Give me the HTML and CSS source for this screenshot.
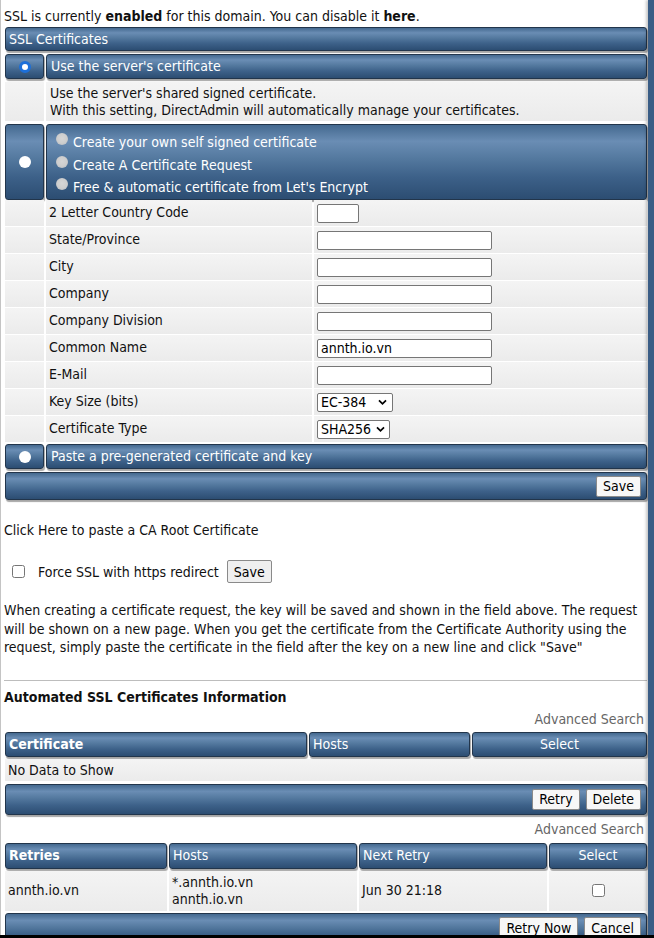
FILE: index.html
```html
<!DOCTYPE html>
<html lang="en">
<head>
<meta charset="utf-8">
<title>SSL Certificates</title>
<link rel="stylesheet" href="styles.css">
</head>
<body>
<div class="page">
  <div class="main">
    <p class="status">SSL is currently <b>enabled</b> for this domain. You can disable it <b>here</b>.</p>

    <div class="ssl">
      <div class="bar title">SSL Certificates</div>

      <div class="pair r1">
        <div class="bar rcell"><span class="radio on"></span></div>
        <div class="bar tcell">Use the server's certificate</div>
      </div>

      <div class="pair desc">
        <div class="cell"></div>
        <div class="cell dtext">Use the server's shared signed certificate.<br>With this setting, DirectAdmin will automatically manage your certificates.</div>
      </div>

      <div class="pair opts">
        <div class="bar rcell"><span class="radio"></span></div>
        <div class="bar ocell">
          <div class="opt"><span class="radio dis"></span>Create your own self signed certificate</div>
          <div class="opt"><span class="radio dis"></span>Create A Certificate Request</div>
          <div class="opt"><span class="radio dis"></span>Free &amp; automatic certificate from Let's Encrypt</div>
        </div>
      </div>

      <div class="form">
        <div class="cell"></div><div class="cell lbl">2 Letter Country Code</div><div class="cell val"><input class="txt short" type="text"></div>
        <div class="cell"></div><div class="cell lbl">State/Province</div><div class="cell val"><input class="txt" type="text"></div>
        <div class="cell"></div><div class="cell lbl">City</div><div class="cell val"><input class="txt" type="text"></div>
        <div class="cell"></div><div class="cell lbl">Company</div><div class="cell val"><input class="txt" type="text"></div>
        <div class="cell"></div><div class="cell lbl">Company Division</div><div class="cell val"><input class="txt" type="text"></div>
        <div class="cell"></div><div class="cell lbl">Common Name</div><div class="cell val"><input class="txt" type="text" value="annth.io.vn"></div>
        <div class="cell"></div><div class="cell lbl">E-Mail</div><div class="cell val"><input class="txt" type="text"></div>
        <div class="cell"></div><div class="cell lbl">Key Size (bits)</div><div class="cell val"><span class="sel w76">EC-384<svg class="chev" viewBox="0 0 10 8" width="9" height="7"><path d="M1 1.5 L5 5.5 L9 1.5" fill="none" stroke="#000" stroke-width="2"/></svg></span></div>
        <div class="cell"></div><div class="cell lbl">Certificate Type</div><div class="cell val"><span class="sel w73">SHA256<svg class="chev" viewBox="0 0 10 8" width="9" height="7"><path d="M1 1.5 L5 5.5 L9 1.5" fill="none" stroke="#000" stroke-width="2"/></svg></span></div>
      </div>

      <div class="pair paste">
        <div class="bar rcell"><span class="radio"></span></div>
        <div class="bar tcell">Paste a pre-generated certificate and key</div>
      </div>

      <div class="bar actions a1"><button class="btn">Save</button></div>
    </div>

    <p class="ca">Click Here to paste a CA Root Certificate</p>

    <div class="force">
      <input type="checkbox" class="chk">
      <span class="force-label">Force SSL with https redirect</span>
      <button class="btn plain">Save</button>
    </div>

    <p class="note">When creating a certificate request, the key will be saved and shown in the field above. The request will be shown on a new page. When you get the certificate from the Certificate Authority using the request, simply paste the certificate in the field after the key on a new line and click "Save"</p>

    <div class="rule"></div>

    <h2 class="section">Automated SSL Certificates Information</h2>

    <div class="adv">Advanced Search</div>
    <div class="list l1">
      <div class="bar hcell b">Certificate</div>
      <div class="bar hcell">Hosts</div>
      <div class="bar hcell c">Select</div>
      <div class="cell empty">No Data to Show</div>
    </div>
    <div class="bar actions a2"><button class="btn">Retry</button><button class="btn">Delete</button></div>

    <div class="adv second">Advanced Search</div>
    <div class="list l2">
      <div class="bar hcell b">Retries</div>
      <div class="bar hcell">Hosts</div>
      <div class="bar hcell">Next Retry</div>
      <div class="bar hcell c">Select</div>
      <div class="cell dcell">annth.io.vn</div>
      <div class="cell dcell">*.annth.io.vn<br>annth.io.vn</div>
      <div class="cell dcell">Jun 30 21:18</div>
      <div class="cell dcell c"><input type="checkbox" class="chk2"></div>
    </div>
    <div class="bar actions a3"><button class="btn">Retry Now</button><button class="btn">Cancel</button></div>
  </div>
  <div class="side"></div>
</div>
<div class="bottom-edge"></div>
</body>
</html>
```

FILE: styles.css
```css
html, body {
  margin: 0;
  padding: 0;
  background: #fff;
}

body {
  font-family: "DejaVu Sans Condensed", "DejaVu Sans", sans-serif;
  font-size: 14px;
  color: #111;
}

.page {
  display: flex;
  width: 654px;
  min-height: 938px;
}

.main {
  width: 644px;
  border-left: 1px solid #c4c4c4;
  padding: 0 0 40px 3px;
}

.side {
  width: 6px;
  background: #3a5d86;
  box-shadow: -2px 0 3px rgba(0, 0, 0, 0.22);
}

.bottom-edge {
  position: fixed;
  left: 0;
  right: 0;
  bottom: 0;
  height: 3px;
  background: #000;
}

.status {
  margin: 0;
  padding-top: 7px;
  line-height: 18px;
}

/* blue bars */
.bar {
  box-sizing: border-box;
  background: linear-gradient(#44698f 0%, #6a8db4 22%, #54799f 45%, #3d6189 70%, #2c4d72 100%);
  border: 1px solid #22354b;
  border-radius: 3px;
  box-shadow: 1px 2px 1px rgba(0, 0, 0, 0.35);
  color: #fff;
}

.cell {
  background: linear-gradient(#f4f4f4, #ebebeb);
}

.ssl {
  margin: 2px 1px 0 1px;
  display: flex;
  flex-direction: column;
}

.title {
  height: 24px;
  line-height: 22px;
  padding-left: 3px;
  margin-bottom: 3px;
}

.pair {
  display: grid;
  grid-template-columns: 39px 1fr;
  column-gap: 2px;
}

.r1 { height: 25px; }
.tcell {
  line-height: 23px;
  padding-left: 4px;
}

.rcell {
  display: flex;
  align-items: center;
  justify-content: center;
}

.radio {
  display: inline-block;
  box-sizing: border-box;
  width: 12px;
  height: 12px;
  border-radius: 50%;
  background: #fff;
}

.radio.on {
  border: 3px solid #1c6fd9;
}

.radio.dis {
  background: radial-gradient(circle at 50% 45%, #d6d6d6 0%, #cdcdcd 55%, #a9b2bc 100%);
  margin-right: 5px;
  position: relative;
  top: -3px;
}

.desc {
  margin-top: 3px;
  height: 39px;
}

.dtext {
  padding: 3px 0 0 4px;
  line-height: 17px;
}

.opts {
  margin-top: 3px;
  height: 75px;
}

.ocell {
  padding: 6px 0 0 9px;
}

.opt {
  height: 22.5px;
  line-height: 22px;
  display: flex;
  align-items: center;
}

.form {
  margin-top: 1px;
  display: grid;
  grid-template-columns: 39px 266px 1fr;
  grid-auto-rows: 26px;
  column-gap: 2px;
  row-gap: 1px;
}

.lbl {
  line-height: 25px;
  padding-left: 3px;
}

.val {
  display: flex;
  align-items: center;
  padding-left: 3px;
}

.txt {
  box-sizing: border-box;
  width: 175px;
  height: 19px;
  border: 1px solid #767676;
  border-radius: 2px;
  background: #fff;
  font: inherit;
  padding: 0 4px 0 3px;
  margin: 0;
  color: #000;
}

.txt.short { width: 42px; }

.sel {
  box-sizing: border-box;
  display: inline-flex;
  align-items: center;
  justify-content: space-between;
  height: 19px;
  border: 1px solid #767676;
  border-radius: 2px;
  background: #fff;
  padding: 0 5px 0 3px;
  color: #000;
}
.sel.w76 { width: 76px; }
.sel.w73 { width: 73px; padding-right: 4px; }

.paste {
  margin-top: 2px;
  height: 25px;
}

.actions {
  display: flex;
  justify-content: flex-end;
  align-items: center;
  gap: 6px;
  padding-right: 5px;
}

.a1 {
  margin-top: 3px;
  height: 28px;
}

.btn {
  font: inherit;
  color: #000;
  height: 21px;
  padding: 0 6px;
  background: #f7f7f7;
  border: 1px solid #8a8a8a;
  border-radius: 2px;
  margin: 0;
}

.ca {
  margin: 21px 0 0 0;
  line-height: 18px;
}

.force {
  margin-top: 21px;
  display: flex;
  align-items: center;
  height: 23px;
}

.chk {
  width: 13px;
  height: 13px;
  margin: 0 0 0 8px;
}

.force-label {
  margin-left: 13px;
}

.btn.plain {
  margin-left: 8px;
  height: 23px;
  background: #efefef;
  padding: 0 6px;
}

.note {
  margin: 18px 0 0 0;
  line-height: 18.5px;
}

.rule {
  margin: 23px 1px 0 0;
  height: 1px;
  background: #bdbdbd;
}

.section {
  margin: 7px 0 0 0;
  font-size: 14px;
  font-weight: bold;
  line-height: 18px;
}

.adv {
  text-align: right;
  color: #666;
  line-height: 18px;
  margin-top: 4px;
  padding-right: 4px;
}

.list {
  margin: 4px 1px 0 1px;
  display: grid;
  column-gap: 2px;
  row-gap: 2px;
}

.l1 {
  grid-template-columns: 302px 161px 1fr;
  grid-template-rows: 25px 22px;
}

.l2 {
  margin-top: 5px;
  grid-template-columns: 162px 188px 188px 1fr;
  grid-template-rows: 26px 40px;
}

.hcell {
  line-height: 23px;
  padding-left: 3px;
}
.hcell.b { font-weight: bold; }
.hcell.c, .dcell.c { text-align: center; padding-left: 0; }

.empty {
  grid-column: 1 / -1;
  line-height: 22px;
  padding-left: 3px;
}

.dcell {
  display: flex;
  flex-direction: column;
  justify-content: center;
  padding-left: 3px;
  line-height: 17px;
}
.dcell.c { align-items: center; }

.chk2 {
  width: 13px;
  height: 13px;
  margin: 0;
}

.a2 {
  margin: 3px 1px 0 1px;
  height: 31px;
}

.second {
  margin-top: 5px;
}

.a3 {
  margin: 2px 1px 0 1px;
  height: 31px;
}
.a3 .btn { height: 22px; }
```
